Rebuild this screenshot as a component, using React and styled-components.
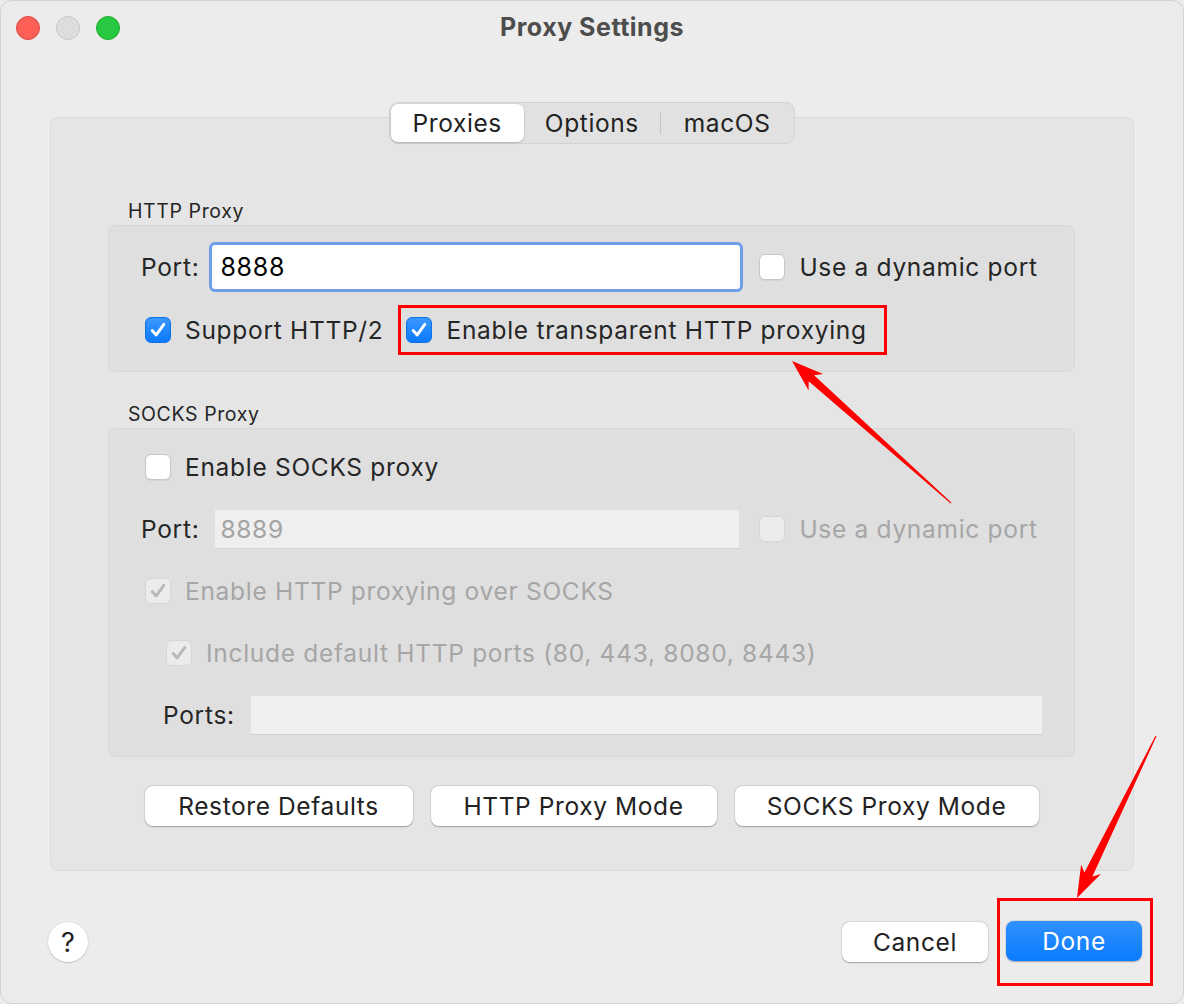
import styled, { createGlobalStyle } from "styled-components";

const GlobalStyle = createGlobalStyle`
  html, body {
    margin: 0;
    padding: 0;
    background: #ececec;
  }
  * { box-sizing: border-box; }
  body {
    font-family: Inter, "Noto Sans", "Liberation Sans", sans-serif;
    color: #262626;
    letter-spacing: 0.7px;
  }
`;

const Window = styled.div`
  position: relative;
  width: 1184px;
  height: 1004px;
  background: #ececec;
  border: 1px solid #d2d2d2;
  border-radius: 12px;
  overflow: hidden;
  display: flex;
  flex-direction: column;
`;

const TitleBar = styled.div`
  position: relative;
  height: 56px;
  padding-bottom: 4px;
  display: flex;
  align-items: center;
  justify-content: center;
`;

const Lights = styled.div`
  position: absolute;
  left: 15px;
  top: 15px;
  display: flex;
  gap: 16px;
`;

const Light = styled.span`
  width: 24px;
  height: 24px;
  border-radius: 50%;
  background: ${(p) => p.$bg};
  border: 1px solid ${(p) => p.$edge};
`;

const Title = styled.h1`
  margin: 0;
  font-size: 25px;
  font-weight: 700;
  color: #4d4d4d;
  letter-spacing: 0.5px;
`;

const Body = styled.div`
  padding: 45px 49px 0 49px;
`;

const TabStrip = styled.div`
  display: flex;
  justify-content: center;
  margin-bottom: -27px;
  position: relative;
  z-index: 1;
`;

const Segmented = styled.div`
  display: flex;
  align-items: center;
  height: 42px;
  padding: 1px;
  background: #e1e1e1;
  border: 1px solid #d3d3d3;
  border-radius: 9px;
`;

const Segment = styled.div`
  height: 38px;
  display: flex;
  align-items: center;
  padding: 0 ${(p) => p.$pad || 21}px;
  font-size: 24.5px;
  letter-spacing: 0.6px;
  color: #222;
  border-radius: 7px;
  background: ${(p) => (p.$active ? "#fff" : "transparent")};
  box-shadow: ${(p) =>
    p.$active ? "0 1px 2px rgba(0,0,0,0.18), 0 0 0 0.5px rgba(0,0,0,0.08)" : "none"};
`;

const SegDivider = styled.span`
  width: 1px;
  height: 22px;
  background: #c4c4c4;
`;

const GroupBox = styled.div`
  height: 754px;
  background: #e5e5e5;
  border: 1px solid #d9d9d9;
  border-radius: 8px;
  padding: 81px 58px 0 57px;
  display: flex;
  flex-direction: column;
`;

const SectionLabel = styled.div`
  font-size: 19.5px;
  letter-spacing: 0.6px;
  line-height: 24px;
  height: 24px;
  margin-left: 20px;
  margin-bottom: 2px;
  color: #262626;
`;

const Panel = styled.div`
  background: #dfdfdf;
  border: 1px solid #d7d7d7;
  border-radius: 8px;
  padding: ${(p) => p.$pad};
  display: flex;
  flex-direction: column;
  gap: ${(p) => p.$gap}px;
  margin-bottom: ${(p) => p.$mb || 0}px;
`;

const Row = styled.div`
  height: ${(p) => p.$h || 50}px;
  display: flex;
  align-items: center;
  padding-left: ${(p) => p.$indent ?? 32}px;
`;

const FieldLabel = styled.span`
  font-size: 24.5px;
  color: ${(p) => (p.$disabled ? "#a6a6a6" : "#262626")};
  margin-right: ${(p) => p.$gap || 10}px;
  white-space: nowrap;
`;

const FocusInput = styled.div`
  width: 534px;
  height: 50px;
  border: 3px solid #6f9fe8;
  border-radius: 6px;
  background: #fff;
  display: flex;
  align-items: center;
  padding-left: 8px;
  font-size: 25px;
  color: #000;
  margin-right: 16px;
  flex: none;
`;

const FlatInput = styled.div`
  width: ${(p) => p.$w}px;
  height: 38px;
  flex: none;
  background: #efefef;
  box-shadow: 0 1px 0 #cfcfcf;
  display: flex;
  align-items: center;
  padding-left: 5px;
  font-size: 24.5px;
  color: #a3a3a3;
  margin-right: ${(p) => p.$mr || 0}px;
`;

const CheckItem = styled.label`
  display: flex;
  align-items: center;
  gap: 14px;
  font-size: 24.5px;
  color: ${(p) => (p.$disabled ? "#a6a6a6" : "#262626")};
  white-space: nowrap;
  margin-left: ${(p) => p.$ml || 0}px;
`;

const Box = styled.span`
  width: 26px;
  height: 26px;
  border-radius: 6px;
  flex: none;
  display: flex;
  align-items: center;
  justify-content: center;
  ${(p) =>
    p.$checked && !p.$disabled
      ? "background: linear-gradient(#3a98fd, #0b79fe); border: 1px solid #0f73e6;"
      : p.$disabled
      ? "background: #ececec; border: 1px solid #d6d6d6;"
      : "background: #fff; border: 1px solid #c6c6c6; box-shadow: 0 1px 1px rgba(0,0,0,0.06);"}
`;

const Highlight = styled.div`
  border: 3px solid #ff0000;
  padding: ${(p) => p.$pad};
  margin-left: ${(p) => p.$ml || 0}px;
  display: flex;
  align-items: center;
`;

const ButtonRow = styled.div`
  margin-top: 29px;
  display: flex;
  justify-content: center;
  gap: 18px;
`;

const PushButton = styled.button`
  height: 40px;
  width: ${(p) => p.$w}px;
  border: none;
  border-radius: 8px;
  font-family: inherit;
  font-size: 24.5px;
  letter-spacing: 0.6px;
  color: ${(p) => (p.$primary ? "#fff" : "#222")};
  background: ${(p) => (p.$primary ? "linear-gradient(#2f91fd, #0a7bff)" : "#fff")};
  box-shadow: 0 0.5px 1.5px rgba(0, 0, 0, 0.3), 0 0 0 0.5px rgba(0, 0, 0, 0.06);
  display: flex;
  align-items: center;
  justify-content: center;
  padding: 0;
`;

const Footer = styled.div`
  display: flex;
  align-items: center;
  padding: 27px 30px 0 47px;
`;

const HelpButton = styled.button`
  width: 40px;
  height: 40px;
  border-radius: 50%;
  border: none;
  background: #fff;
  box-shadow: 0 0.5px 1.5px rgba(0, 0, 0, 0.3);
  font-family: inherit;
  font-size: 27px;
  color: #222;
  padding: 0;
  display: flex;
  align-items: center;
  justify-content: center;
`;

const Spacer = styled.div`
  flex: 1;
`;

const ArrowLayer = styled.svg`
  position: absolute;
  left: 0;
  top: 0;
  pointer-events: none;
`;

function Check({ color }) {
  return (
    <svg width="18" height="18" viewBox="0 0 18 18">
      <path
        d="M3.2 9.6 L7.2 13.9 L14.8 3.4"
        fill="none"
        stroke={color}
        strokeWidth="2.9"
        strokeLinecap="round"
        strokeLinejoin="round"
      />
    </svg>
  );
}

function Checkbox({ checked, disabled, children, ml }) {
  return (
    <CheckItem $disabled={disabled} $ml={ml}>
      <Box $checked={checked} $disabled={disabled}>
        {checked && <Check color={disabled ? "#b8b8b8" : "#fff"} />}
      </Box>
      {children}
    </CheckItem>
  );
}

export default function App() {
  return (
    <>
      <GlobalStyle />
      <Window>
        <TitleBar>
          <Lights>
            <Light $bg="#fe5f57" $edge="#e2463f" />
            <Light $bg="#dddddd" $edge="#c7c7c7" />
            <Light $bg="#28c840" $edge="#1dac2c" />
          </Lights>
          <Title>Proxy Settings</Title>
        </TitleBar>

        <Body>
          <TabStrip>
            <Segmented>
              <Segment $active $pad={22}>Proxies</Segment>
              <Segment>Options</Segment>
              <SegDivider />
              <Segment $pad={23}>macOS</Segment>
            </Segmented>
          </TabStrip>

          <GroupBox>
            <SectionLabel>HTTP Proxy</SectionLabel>
            <Panel $pad="16px 0 16px 0" $gap={13} $mb={30}>
              <Row>
                <FieldLabel $gap={10}>Port:</FieldLabel>
                <FocusInput>8888</FocusInput>
                <Checkbox>Use a dynamic port</Checkbox>
              </Row>
              <Row>
                <Checkbox checked ml={4}>Support HTTP/2</Checkbox>
                <Highlight $pad="0 17px 0 5px" $ml={15}>
                  <Row $h={44} $indent={0}>
                    <Checkbox checked>Enable transparent HTTP proxying</Checkbox>
                  </Row>
                </Highlight>
              </Row>
            </Panel>

            <SectionLabel>SOCKS Proxy</SectionLabel>
            <Panel $pad="18px 0 21px 0" $gap={22}>
              <Row $h={40}>
                <Checkbox ml={4}>Enable SOCKS proxy</Checkbox>
              </Row>
              <Row $h={40}>
                <FieldLabel $gap={16}>Port:</FieldLabel>
                <FlatInput $w={524} $mr={20}>8889</FlatInput>
                <Checkbox disabled>Use a dynamic port</Checkbox>
              </Row>
              <Row $h={40}>
                <Checkbox checked disabled ml={4}>
                  Enable HTTP proxying over SOCKS
                </Checkbox>
              </Row>
              <Row $h={40}>
                <Checkbox checked disabled ml={25}>
                  Include default HTTP ports (80, 443, 8080, 8443)
                </Checkbox>
              </Row>
              <Row $h={40} $indent={54}>
                <FieldLabel $gap={16}>Ports:</FieldLabel>
                <FlatInput $w={791} />
              </Row>
            </Panel>

            <ButtonRow>
              <PushButton $w={268}>Restore Defaults</PushButton>
              <PushButton $w={286}>HTTP Proxy Mode</PushButton>
              <PushButton $w={304}>SOCKS Proxy Mode</PushButton>
            </ButtonRow>
          </GroupBox>
        </Body>

        <Footer>
          <HelpButton>?</HelpButton>
          <Spacer />
          <PushButton $w={146}>Cancel</PushButton>
          <Highlight $pad="20px 8px 22px 6px" $ml={9}>
            <PushButton $w={136} $primary>
              Done
            </PushButton>
          </Highlight>
        </Footer>

        <ArrowLayer width="1184" height="1004" viewBox="0 0 1184 1004">
          <polygon
            fill="#ff0000"
            points="791,360 807.6,389.5 807.7,380.3 949.7,502.4 950.3,501.6 813.1,374.3 822.2,373.1"
          />
          <polygon
            fill="#ff0000"
            points="1076,897 1099.9,873 1091.4,875.6 1155.5,735.3 1154.5,734.7 1083.4,871.6 1080.1,863.4"
          />
        </ArrowLayer>
      </Window>
    </>
  );
}
